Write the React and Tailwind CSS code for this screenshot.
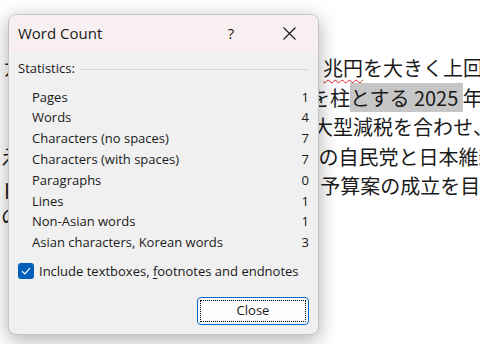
import React from "react";

const stats = [
  ["Pages", "1"],
  ["Words", "4"],
  ["Characters (no spaces)", "7"],
  ["Characters (with spaces)", "7"],
  ["Paragraphs", "0"],
  ["Lines", "1"],
  ["Non-Asian words", "1"],
  ["Asian characters, Korean words", "3"],
];

const jp = { fontFamily: '"Noto Sans CJK JP", "Noto Sans", sans-serif' };
const ui = { fontFamily: '"Segoe UI", "Open Sans", "Noto Sans", sans-serif' };

const DocumentText = () => (
  <div
    className="pt-[53px] text-[20px] leading-[29.5px] text-[#1a1a1a] whitespace-nowrap"
    style={jp}
  >
    <div className="pl-[3px]">
      ガソリン税の暫定税率を廃止し１２
      <span className="underline decoration-wavy decoration-[#e0201b] decoration-1 underline-offset-[3px]">
        兆円
      </span>
      を大きく上回る
    </div>
    <div className="pl-[10px]">
      エネルギー価格高騰への対策などを柱
      <span className="bg-[#c6c6c6]">とする 2025 </span>年度
    </div>
    <div className="pl-[13px]">ブリッジ政策と物価高対策それに大型減税を合わせ、</div>
    <div className="pl-[0px]">ええと、少数与党となった石破政権の自民党と日本維新</div>
    <div className="pl-[1px]">ｐ：協議の場で修正を加えた上で、予算案の成立を目指す</div>
    <div className="pl-[1px]">の審議を進める方針だ。</div>
  </div>
);

const WordCountDialog = () => (
  <div
    className="absolute left-[8px] top-[14px] w-[311px] h-[321px] rounded-[8px] border border-[#c4c4c4] bg-[#f0f0f0] overflow-hidden shadow-[0_5px_20px_rgba(0,0,0,0.32)] flex flex-col text-[#1a1a1a]"
    style={ui}
  >
    <div className="h-[37px] bg-[#f8eff0] flex items-center pl-[9px] pr-[22px] shrink-0">
      <span className="text-[15px] flex-1">Word Count</span>
      <span className="text-[15px] w-[14px] text-center mr-[45px]">?</span>
      <svg width="13" height="13" viewBox="0 0 13 13" className="block">
        <path d="M0.5 0.5 L12.5 12.5 M12.5 0.5 L0.5 12.5" stroke="#1a1a1a" strokeWidth="1.1" />
      </svg>
    </div>

    <div className="flex-1 flex flex-col px-[9px] pt-[8px] text-[13px]">
      <div className="flex items-center gap-[5px] h-[18px]">
        <span>Statistics:</span>
        <div className="flex-1 h-px bg-[#d6d6d6]" />
      </div>

      <div className="mt-[9px] pl-[14px]">
        {stats.map(([label, value]) => (
          <div key={label} className="flex justify-between h-[20.8px] items-center">
            <span>{label}</span>
            <span>{value}</span>
          </div>
        ))}
      </div>

      <label className="flex items-center gap-[5px] mt-[8px] h-[20px]">
        <span className="w-[16px] h-[16px] rounded-[3px] bg-[#005fb8] flex items-center justify-center">
          <svg width="10" height="8" viewBox="0 0 10 8">
            <path d="M1 4.2 L3.8 7 L9 1.2" fill="none" stroke="#fff" strokeWidth="1.2" />
          </svg>
        </span>
        <span>
          Include textboxes, <span className="underline underline-offset-2">f</span>ootnotes and endnotes
        </span>
      </label>

      <div className="flex justify-end mt-auto mb-[9px]">
        <button className="w-[112px] h-[28px] rounded-[4px] border border-[#0067c0] bg-[#fdfdfd] p-[2px]">
          <div className="w-full h-full border border-dotted border-black flex items-center justify-center text-[13px]">
            Close
          </div>
        </button>
      </div>
    </div>
  </div>
);

export default function App() {
  return (
    <div className="relative w-[480px] h-[344px] bg-white overflow-hidden">
      <DocumentText />
      <WordCountDialog />
    </div>
  );
}
